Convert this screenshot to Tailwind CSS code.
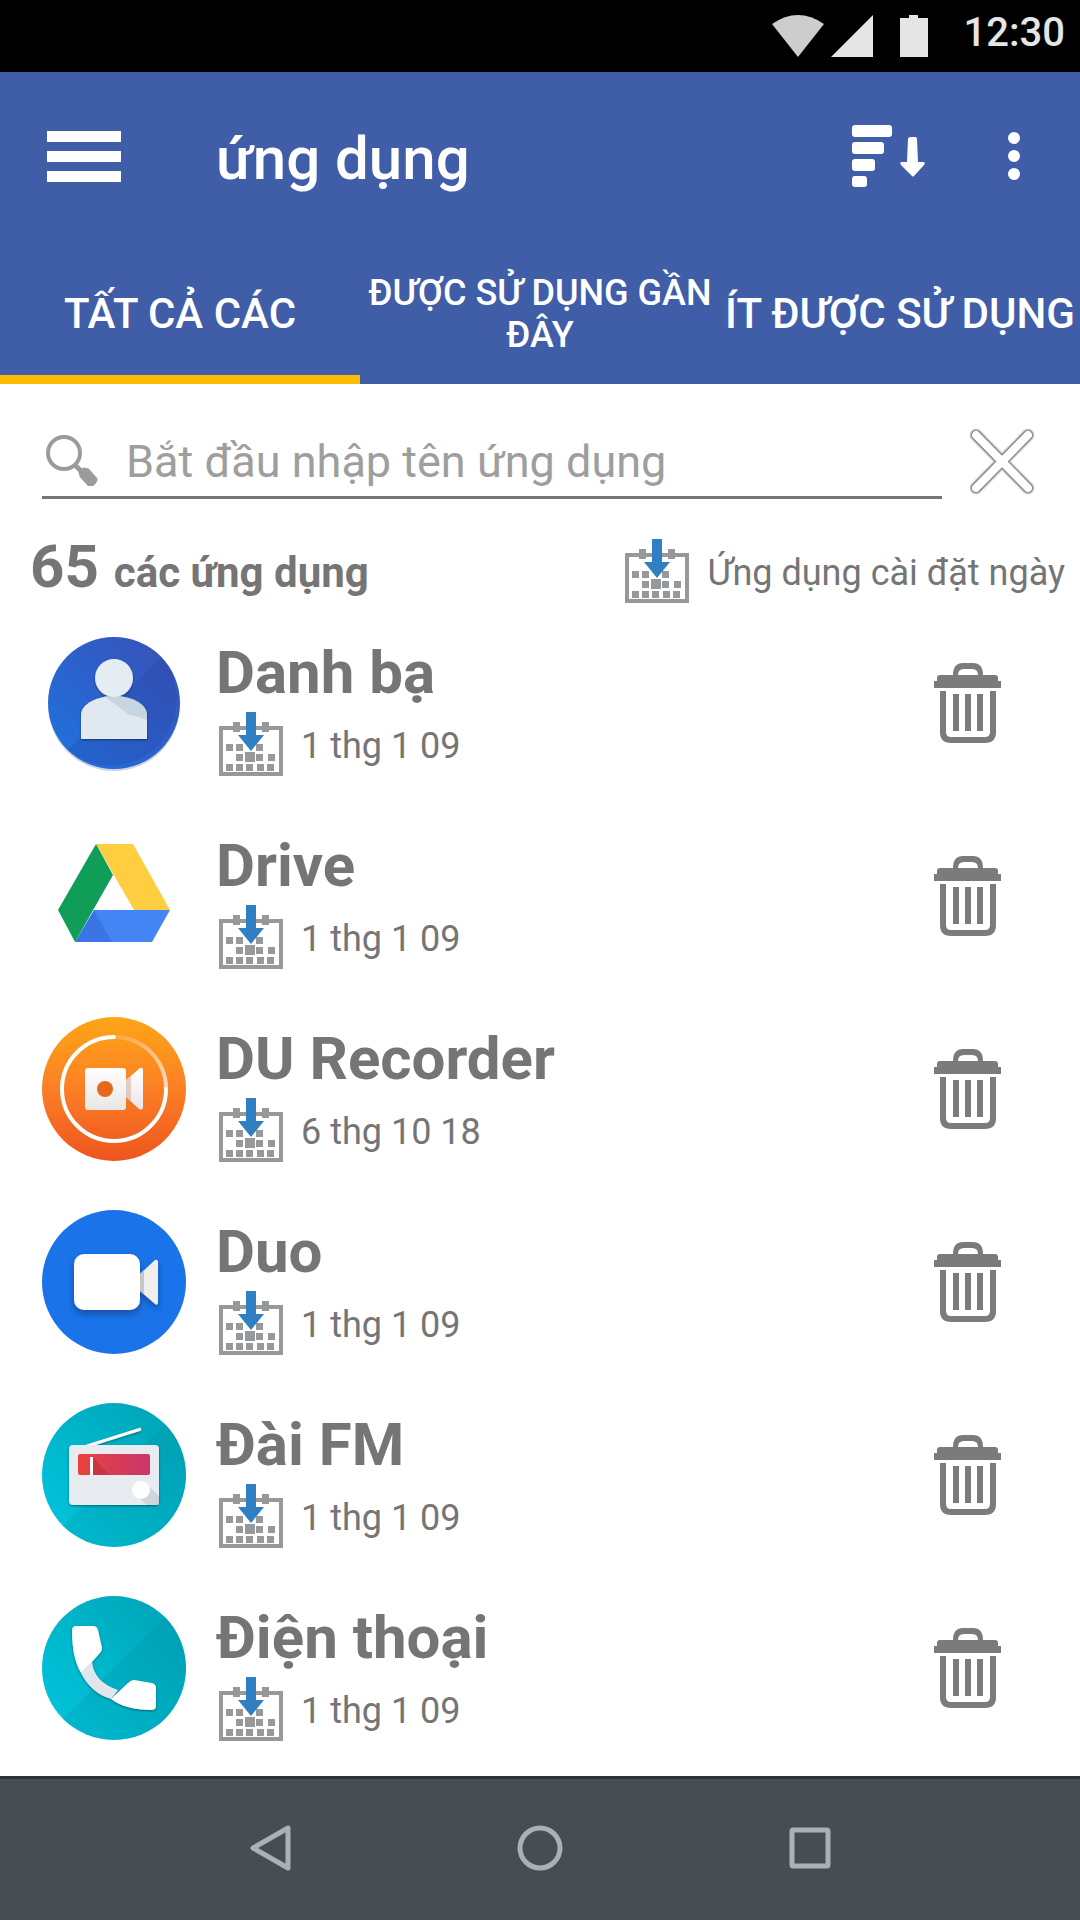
<!DOCTYPE html>
<html lang="vi">
<head>
    <meta charset="UTF-8">
    <meta name="viewport" content="width=device-width, initial-scale=1.0">
    <title>ứng dụng</title>
    <script src="https://cdn.jsdelivr.net/npm/@tailwindcss/browser@4"></script>
</head>
<body class="bg-white font-['Roboto','Noto_Sans',sans-serif] text-[#757575]">
    <!-- Shared icons -->
    <svg class="absolute h-0 w-0" aria-hidden="true">
        <symbol id="calendar" viewBox="0 0 64 64">
            <rect x="2" y="16" width="60" height="46" fill="none" stroke="#979899" stroke-width="4"/>
            <path fill="#979899" d="M14 10h7v10h-7zM43 10h7v10h-7zM7 32h7v7H7zM17 32h7v7h-7zM37 32h7v7h-7zM17 42h7v7h-7zM26 40h10v10H26zM37 42h7v7h-7zM49 42h7v7h-7zM7 52h7v7H7zM17 52h7v7h-7zM27 52h7v7h-7zM38 52h7v7h-7zM48 52h7v7h-7z"/>
            <path fill="#317fc3" d="M27 0h10v23h8L32 39 19 23h8z"/>
        </symbol>
        <symbol id="trash" viewBox="0 0 67 80">
            <path fill="#7b7b7b" d="M0 18h3v-3q0-3 3-3h13Q19 0 29 0h10q10 0 10 12h12q3 0 3 3v3h3v7H0zM24 12h20q0-6-6-6h-8q-6 0-6 6z"/>
            <path fill="none" stroke="#7b7b7b" stroke-width="6" d="M9 28v41q0 8 8 8h34q8 0 8-8V28"/>
            <path fill="#7b7b7b" d="M19 31h6v37h-6zM31 31h6v37h-6zM43 31h6v37h-6z"/>
        </symbol>
        <defs>
            <linearGradient id="blue" x1="0" y1="1" x2="1" y2="0">
                <stop offset="0" stop-color="#1f74e0"/><stop offset=".5" stop-color="#2c61cc"/><stop offset="1" stop-color="#3a50b4"/>
            </linearGradient>
            <linearGradient id="orange" x1="0" y1="0" x2="0" y2="1">
                <stop offset="0" stop-color="#fda616"/><stop offset=".5" stop-color="#fb7f25"/><stop offset="1" stop-color="#ee541e"/>
            </linearGradient>
            <linearGradient id="grey" x1="0" y1="0" x2="0" y2="1">
                <stop offset="0" stop-color="#fff"/><stop offset="1" stop-color="#e9e6e6"/>
            </linearGradient>
            <linearGradient id="teal" x1="0" y1="1" x2="1" y2="0">
                <stop offset=".1" stop-color="#00c4db"/><stop offset=".9" stop-color="#00a5b8"/>
            </linearGradient>
            <linearGradient id="red" x1="0" y1="0" x2="1" y2="0">
                <stop offset="0" stop-color="#e8443b"/><stop offset="1" stop-color="#c9356c"/>
            </linearGradient>
            <linearGradient id="fade" x1="0" y1="0" x2="1" y2="1">
                <stop offset="0" stop-color="#fff" stop-opacity=".15"/><stop offset="1" stop-color="#fff" stop-opacity=".7"/>
            </linearGradient>
            <filter id="shadow" x="-20%" y="-20%" width="140%" height="150%">
                <feDropShadow dx="0" dy="1" stdDeviation="1" flood-color="#000" flood-opacity=".45"/>
            </filter>
            <filter id="deep" x="-20%" y="-20%" width="140%" height="150%">
                <feDropShadow dx="0" dy="4" stdDeviation="3" flood-color="#072a6b" flood-opacity=".5"/>
            </filter>
            <clipPath id="disc"><circle cx="72" cy="72" r="72"/></clipPath>
        </defs>
    </svg>

    <div class="flex min-h-screen flex-col">
        <!-- Status bar -->
        <div class="flex h-[72px] items-start justify-end bg-black pr-[15px] text-[#e5e5e5]">
            <svg class="mt-[15px] h-[42px] w-[156px]" viewBox="0 0 156 42" fill="currentColor">
                <path fill="#cdcdcd" d="M0 9Q26-9 52 9L26 42z"/>
                <path d="M101 0v42H59z"/>
                <path d="M137 0h9v3h10v39h-28V3h9z"/>
            </svg>
            <span class="ml-9 text-[40px] leading-[66px] font-medium">12:30</span>
        </div>

        <!-- App bar and tabs -->
        <header class="bg-[#405da8] text-white">
            <div class="flex h-[168px] items-center pr-12 pl-[47px]">
                <button type="button" aria-label="Menu">
                    <svg class="h-[51px] w-[74px]" viewBox="0 0 74 51" fill="currentColor">
                        <path d="M0 0h74v11H0zM0 20h74v11H0zM0 40h74v11H0z"/>
                    </svg>
                </button>
                <h1 class="ml-[95px] flex-1 pt-[6px] text-[60px] leading-[70px] font-medium">ứng dụng</h1>
                <button type="button" aria-label="Sắp xếp">
                    <svg class="h-[62px] w-[73px]" viewBox="0 0 73 62" fill="currentColor">
                        <rect width="40" height="12" rx="3"/>
                        <rect y="17" width="32" height="12" rx="3"/>
                        <rect y="34" width="23" height="12" rx="3"/>
                        <rect y="51" width="15" height="11" rx="3"/>
                        <path d="M59 12h4q2 0 2 2l1 23h5q3 0 1 3L62 51q-1 1-2 0L49 40q-2-3 1-3h5l1-23q0-2 3-2z"/>
                    </svg>
                </button>
                <button type="button" class="ml-[79px]" aria-label="Thêm">
                    <svg class="h-[62px] w-[28px]" viewBox="0 0 28 62" fill="currentColor">
                        <circle cx="10" cy="13" r="6"/><circle cx="10" cy="31" r="6"/><circle cx="10" cy="49" r="6"/>
                    </svg>
                </button>
            </div>
            <nav class="grid h-36 grid-cols-3 font-medium" role="tablist">
                <button type="button" role="tab" aria-selected="true" class="border-b-[9px] border-[#ffbc00] pt-3 text-[42px] leading-[49px] whitespace-nowrap">TẤT CẢ CÁC</button>
                <button type="button" role="tab" aria-selected="false" class="border-b-[9px] border-transparent pt-3 text-[36px] leading-[42px]">ĐƯỢC SỬ DỤNG GẦN ĐÂY</button>
                <button type="button" role="tab" aria-selected="false" class="border-b-[9px] border-transparent pt-3 text-[42px] leading-[49px] whitespace-nowrap">ÍT ĐƯỢC SỬ DỤNG</button>
            </nav>
        </header>

        <main>
            <!-- Search -->
            <div class="flex items-center pt-10 pr-[18px] pl-[42px]">
                <label class="flex h-[75px] flex-1 items-center border-b-[3px] border-[#757575] pl-1">
                    <svg class="h-[52px] w-[52px] shrink-0" viewBox="0 0 52 52" fill="none" stroke="#9b9b9b">
                        <circle cx="18" cy="19" r="16" stroke-width="4"/>
                        <path stroke-width="5" d="M29 31l6 6"/>
                        <path fill="#9b9b9b" stroke-width="3" stroke-linejoin="round" d="M34 38l4-3 4 1 8 9q0 3-4 6h-3l-8-9z"/>
                    </svg>
                    <input type="text" aria-label="Tìm ứng dụng" placeholder="Bắt đầu nhập tên ứng dụng" class="ml-7 w-full pt-1 text-[45px] leading-[54px] outline-none placeholder:text-[#9e9e9e]">
                </label>
                <button type="button" class="flex w-[120px] justify-center" aria-label="Xóa">
                    <svg class="h-[72px] w-[72px]" viewBox="0 0 72 72" fill="none" stroke-linecap="round">
                        <path stroke="#eee" stroke-width="14" d="M10 9l52 53M62 9L10 62"/>
                        <path stroke="#bbb" stroke-width="12" d="M10 9l52 53M62 9L10 62"/>
                        <path stroke="#808080" stroke-width="10" d="M10 9l52 53M62 9L10 62"/>
                        <path stroke="#fff" stroke-width="8" d="M10 9l52 53M62 9L10 62"/>
                    </svg>
                </button>
            </div>

            <!-- Summary -->
            <div class="flex h-[108px] items-start justify-between pt-8 pr-[15px] pl-[30px]">
                <p class="pt-px font-bold"><span class="text-[60px] leading-[70px]">65</span> <span class="ml-[11px] text-[42px]">các ứng dụng</span></p>
                <p class="flex items-center pt-2 text-[36px] leading-[42px]">
                    <svg class="mr-[18px] h-16 w-16"><use href="#calendar"/></svg>
                    <span class="pt-1">Ứng dụng cài đặt ngày</span>
                </p>
            </div>

            <!-- App list -->
            <ul class="flex flex-col gap-px">
                <li class="flex h-48 items-center pr-[79px] pl-[42px]">
                    <svg class="h-36 w-36" viewBox="0 0 144 144">
                        <circle cx="72" cy="74" r="66" fill="#ccd3df"/>
                        <circle cx="72" cy="72" r="66" fill="url(#blue)"/>
                        <path fill="#263f9e" opacity=".25" d="M119 26A66 66 0 0 1 26 119z"/>
                        <g filter="url(#shadow)">
                            <path fill="#dfe9ef" d="M39 108V84c0-12 18-19 33-19s33 7 33 19v24z"/>
                            <path fill="#b8c8d4" opacity=".6" d="M62 65l24 18q8 2 19 6v-5c0-12-16-19-33-19z"/>
                            <circle cx="72" cy="47" r="19" fill="#e4edf2"/>
                        </g>
                    </svg>
                    <div class="ml-[30px] flex-1 pt-1">
                        <h2 class="pt-[3px] text-[60px] leading-[70px] font-bold">Danh bạ</h2>
                        <p class="flex items-center pt-1 pl-[3px] text-[36px] leading-[42px]"><svg class="mr-[18px] h-16 w-16"><use href="#calendar"/></svg><span class="pt-1">1 thg 1 09</span></p>
                    </div>
                    <button type="button" aria-label="Gỡ Danh bạ"><svg class="h-20 w-[67px]"><use href="#trash"/></svg></button>
                </li>
                <li class="flex h-48 items-center pr-[79px] pl-[42px]">
                    <svg class="h-36 w-36" viewBox="0 0 144 144">
                        <path fill="#ffcd40" d="M54 20h37l37 66H92z"/>
                        <path fill="#4385f5" d="M52 86h76l-18 32H33z"/>
                        <path fill="#3367d6" opacity=".55" d="M52 86l18 32H33z"/>
                        <path fill="#109d58" d="M54 20l17 31-38 67-17-32z"/>
                    </svg>
                    <div class="ml-[30px] flex-1 pt-1">
                        <h2 class="pt-[3px] text-[60px] leading-[70px] font-bold">Drive</h2>
                        <p class="flex items-center pt-1 pl-[3px] text-[36px] leading-[42px]"><svg class="mr-[18px] h-16 w-16"><use href="#calendar"/></svg><span class="pt-1">1 thg 1 09</span></p>
                    </div>
                    <button type="button" aria-label="Gỡ Drive"><svg class="h-20 w-[67px]"><use href="#trash"/></svg></button>
                </li>
                <li class="flex h-48 items-center pr-[79px] pl-[42px]">
                    <svg class="h-36 w-36" viewBox="0 0 144 144">
                        <circle cx="72" cy="72" r="72" fill="url(#orange)"/>
                        <path fill="none" stroke="url(#fade)" stroke-width="4" d="M74 20a52 52 0 0 1 50 52"/>
                        <path fill="none" stroke="#fff" stroke-width="4" stroke-linecap="round" d="M72 20A52 52 0 1 0 124 72"/>
                        <path fill="url(#grey)" d="M46 51h35q3 0 3 3v9l14-12q3-1 3 2v37q0 4-4 2L84 80v10q0 3-3 3H46q-3 0-3-3V54q0-3 3-3z"/>
                        <path fill="#d8b0a0" opacity=".6" d="M84 63v17l5 4V59z"/>
                        <circle cx="63" cy="72" r="8" fill="#e5691c"/>
                    </svg>
                    <div class="ml-[30px] flex-1 pt-1">
                        <h2 class="pt-[3px] text-[60px] leading-[70px] font-bold">DU Recorder</h2>
                        <p class="flex items-center pt-1 pl-[3px] text-[36px] leading-[42px]"><svg class="mr-[18px] h-16 w-16"><use href="#calendar"/></svg><span class="pt-1">6 thg 10 18</span></p>
                    </div>
                    <button type="button" aria-label="Gỡ DU Recorder"><svg class="h-20 w-[67px]"><use href="#trash"/></svg></button>
                </li>
                <li class="flex h-48 items-center pr-[79px] pl-[42px]">
                    <svg class="h-36 w-36" viewBox="0 0 144 144">
                        <circle cx="72" cy="72" r="72" fill="#1a73e8"/>
                        <g filter="url(#deep)">
                            <path fill="#eee" d="M97 65l16-15q3-1 3 2v40q0 4-3 2L97 80z"/>
                            <path fill="#c6c6c6" d="M97 65l5-5v24l-5-4z"/>
                            <rect x="32" y="44" width="66" height="56" rx="10" fill="#fff"/>
                        </g>
                    </svg>
                    <div class="ml-[30px] flex-1 pt-1">
                        <h2 class="pt-[3px] text-[60px] leading-[70px] font-bold">Duo</h2>
                        <p class="flex items-center pt-1 pl-[3px] text-[36px] leading-[42px]"><svg class="mr-[18px] h-16 w-16"><use href="#calendar"/></svg><span class="pt-1">1 thg 1 09</span></p>
                    </div>
                    <button type="button" aria-label="Gỡ Duo"><svg class="h-20 w-[67px]"><use href="#trash"/></svg></button>
                </li>
                <li class="flex h-48 items-center pr-[79px] pl-[42px]">
                    <svg class="h-36 w-36" viewBox="0 0 144 144">
                        <circle cx="72" cy="72" r="72" fill="url(#teal)"/>
                        <path clip-path="url(#disc)" fill="#008c9e" opacity=".22" d="M144 0v144H0z"/>
                        <g filter="url(#shadow)">
                            <path stroke="#fff" stroke-width="3" d="M42 44l57-18"/>
                            <rect x="27" y="42" width="90" height="60" rx="4" fill="#e8ecf0"/>
                        </g>
                        <rect x="36" y="51" width="72" height="21" rx="2" fill="url(#red)"/>
                        <path fill="#8c1530" opacity=".25" d="M51 54l16 18H51z"/>
                        <path fill="#fff" d="M48 54h3v18h-3z"/>
                        <path fill="#c5ccd2" opacity=".7" d="M106 82l11 11v9h-12l-12-10z"/>
                        <circle cx="99" cy="87" r="9" fill="#fff"/>
                    </svg>
                    <div class="ml-[30px] flex-1 pt-1">
                        <h2 class="pt-[3px] text-[60px] leading-[70px] font-bold">Đài FM</h2>
                        <p class="flex items-center pt-1 pl-[3px] text-[36px] leading-[42px]"><svg class="mr-[18px] h-16 w-16"><use href="#calendar"/></svg><span class="pt-1">1 thg 1 09</span></p>
                    </div>
                    <button type="button" aria-label="Gỡ Đài FM"><svg class="h-20 w-[67px]"><use href="#trash"/></svg></button>
                </li>
                <li class="flex h-48 items-center pr-[79px] pl-[42px]">
                    <svg class="h-36 w-36" viewBox="0 0 144 144">
                        <circle cx="72" cy="72" r="72" fill="url(#teal)"/>
                        <path clip-path="url(#disc)" fill="#008c9e" opacity=".22" d="M144 0v144H0z"/>
                        <g filter="url(#shadow)">
                            <path fill="#e1e6ec" d="M50 66Q52 86 76 94L69 103Q49 97 39 77z"/>
                            <path fill="#fff" d="M34 30h17q4 0 5 4l4 18q0 3-2 5l-8 9-11 11Q30 62 30 35q0-5 4-5zM69 103l17-16q3-3 6-3l18 3q4 1 4 5v18q0 4-5 4-25 0-40-11z"/>
                        </g>
                    </svg>
                    <div class="ml-[30px] flex-1 pt-1">
                        <h2 class="pt-[3px] text-[60px] leading-[70px] font-bold">Điện thoại</h2>
                        <p class="flex items-center pt-1 pl-[3px] text-[36px] leading-[42px]"><svg class="mr-[18px] h-16 w-16"><use href="#calendar"/></svg><span class="pt-1">1 thg 1 09</span></p>
                    </div>
                    <button type="button" aria-label="Gỡ Điện thoại"><svg class="h-20 w-[67px]"><use href="#trash"/></svg></button>
                </li>
            </ul>
        </main>

        <!-- System navigation -->
        <nav class="mt-auto flex h-36 items-center justify-center border-t-[3px] border-[#2d3338] bg-[#464d53] pb-1">
            <div class="flex w-3/4 justify-around text-[#abb0b4]">
                <button type="button" aria-label="Quay lại">
                    <svg class="h-12 w-12" viewBox="0 0 48 48" fill="none" stroke="currentColor" stroke-width="5" stroke-linejoin="round"><path d="M42 4v40L7 24z"/></svg>
                </button>
                <button type="button" aria-label="Trang chủ">
                    <svg class="h-12 w-12" viewBox="0 0 48 48" fill="none" stroke="currentColor" stroke-width="5"><circle cx="24" cy="24" r="20"/></svg>
                </button>
                <button type="button" aria-label="Gần đây">
                    <svg class="h-12 w-12" viewBox="0 0 48 48" fill="none" stroke="currentColor" stroke-width="5"><rect x="6" y="6" width="36" height="36" rx="1"/></svg>
                </button>
            </div>
        </nav>
    </div>
</body>
</html>
